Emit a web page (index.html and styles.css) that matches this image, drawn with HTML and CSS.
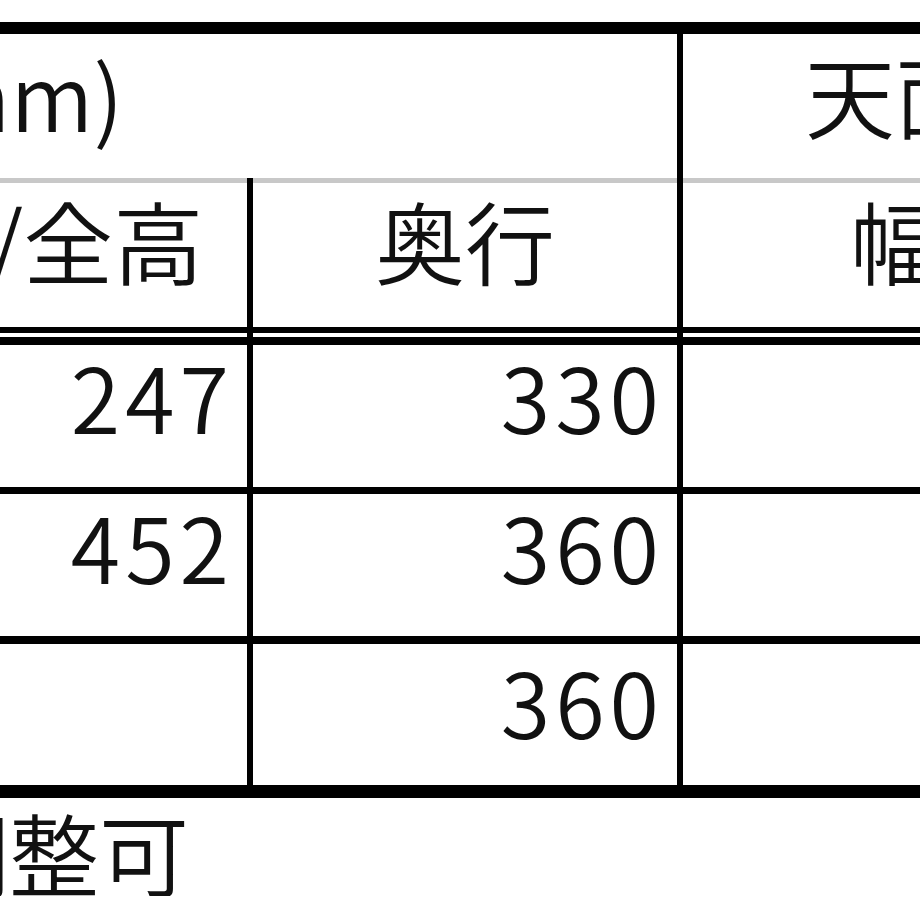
FILE: index.html
```html
<!DOCTYPE html>
<html lang="ja">
<head>
<meta charset="utf-8">
<title>サイズ表</title>
<link rel="stylesheet" href="styles.css">
</head>
<body>
<div class="sheet">
  <div class="grid">
    <div class="cell group">寸法(mm)</div>
    <div class="cell group-c">天面</div>

    <div class="cell head">座面高/全高</div>
    <div class="cell head">奥行</div>
    <div class="cell head">幅</div>

    <div class="cell row1 num">247</div>
    <div class="cell row1 num">330</div>
    <div class="cell row1 num"></div>

    <div class="cell row2 num">452</div>
    <div class="cell row2 num">360</div>
    <div class="cell row2 num"></div>

    <div class="cell row3 num"></div>
    <div class="cell row3 num">360</div>
    <div class="cell row3 num"></div>
  </div>
  <p class="note">高さ調整可</p>
</div>
</body>
</html>
```

FILE: styles.css
```css
html, body {
  margin: 0;
  background: #fff;
}

body {
  font-family: "Noto Sans CJK JP", "Noto Sans", sans-serif;
  font-weight: 350;
  color: #111;
  overflow: hidden;
}

.sheet {
  margin-left: -326px;
  padding-top: 22px;
}

.grid {
  display: grid;
  grid-template-columns: 579px 430px 430px;
  grid-template-rows: 144px 155px 161px 150px 154px;
  border-top: 12px solid #000;
  width: max-content;
}

.cell {
  box-sizing: border-box;
  display: flex;
  align-items: center;
  justify-content: center;
  border-right: 6px solid #000;
  font-size: 90px;
  line-height: 1;
  white-space: nowrap;
}

.group {
  grid-column: 1 / span 2;
  justify-content: flex-start;
  padding-left: 44px;
  padding-bottom: 26px;
}

.group-c {
  padding-bottom: 26px;
}

.head {
  padding-top: 5px;
  padding-bottom: 32px;
  box-shadow: inset 0 5px 0 #c8c8c8;
  border-bottom: 6px solid #000;
}

.num {
  justify-content: flex-end;
  padding-right: 13px;
  letter-spacing: 5px;
}

.row1 {
  padding-top: 12px;
  padding-bottom: 42px;
  box-shadow: inset 0 4px 0 #fff, inset 0 12px 0 #000;
  border-bottom: 7px solid #000;
}

.row2 {
  padding-bottom: 40px;
  border-bottom: 8px solid #000;
}

.row3 {
  padding-bottom: 30px;
  border-bottom: 13px solid #000;
}

.note {
  margin: 8px 0 0;
  padding-left: 65px;
  font-size: 90px;
  line-height: 1;
}
```
